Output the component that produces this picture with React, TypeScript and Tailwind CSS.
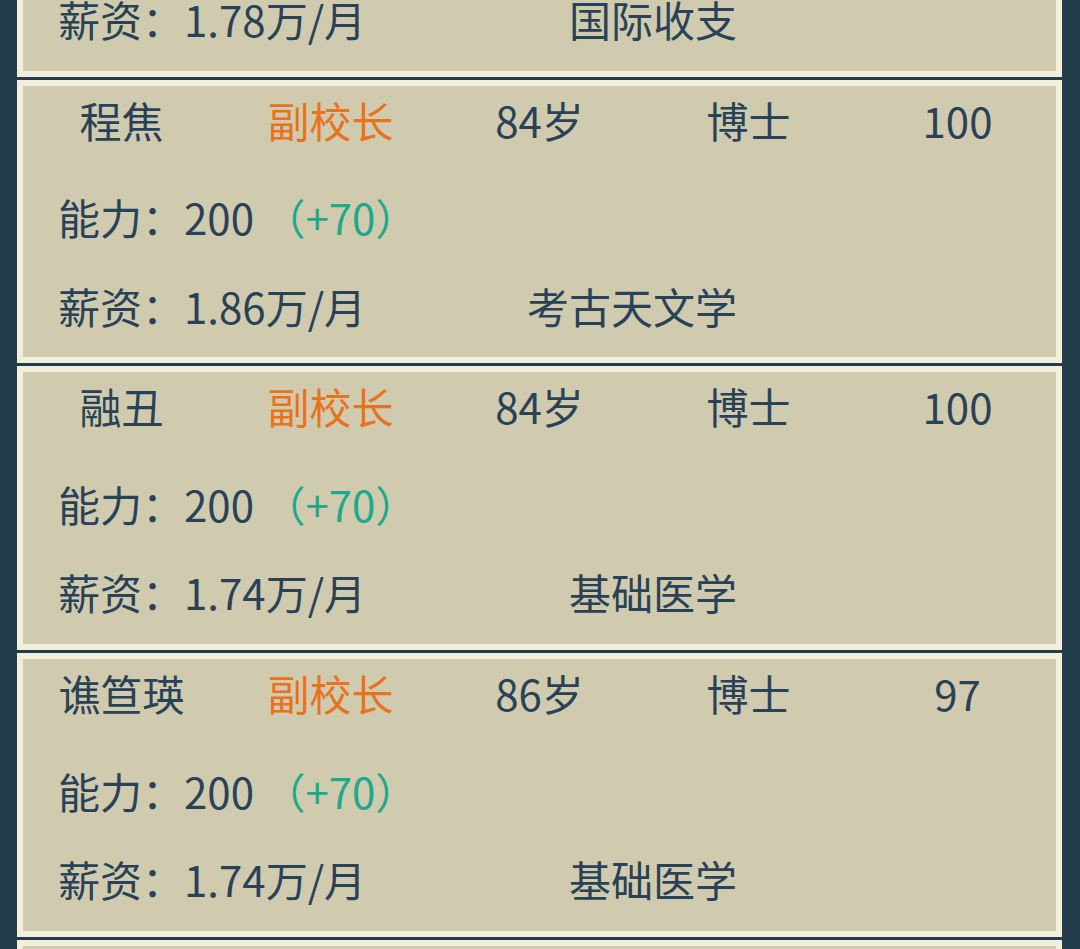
import React from "react";

interface Staff {
  name: string;
  title: string;
  age: number;
  degree: string;
  score: number;
  ability: number;
  bonus: number;
  salary: string;
  major: string;
}

const STAFF: Staff[] = [
  { name: "蒲岚", title: "副校长", age: 83, degree: "博士", score: 99, ability: 200, bonus: 70, salary: "1.78", major: "国际收支" },
  { name: "程焦", title: "副校长", age: 84, degree: "博士", score: 100, ability: 200, bonus: 70, salary: "1.86", major: "考古天文学" },
  { name: "融丑", title: "副校长", age: 84, degree: "博士", score: 100, ability: 200, bonus: 70, salary: "1.74", major: "基础医学" },
  { name: "谯笪瑛", title: "副校长", age: 86, degree: "博士", score: 97, ability: 200, bonus: 70, salary: "1.74", major: "基础医学" },
  { name: "司马涵", title: "教务长", age: 79, degree: "博士", score: 95, ability: 190, bonus: 60, salary: "1.62", major: "理论物理" },
];

function StaffCard({ s }: { s: Staff }) {
  return (
    <div className="h-[283.7px] shrink-0 bg-[#d0cbae] shadow-[inset_0_0_0_6px_#f2efdc] pt-[10px] text-[42px] leading-[60px] text-[#2a4258]">
      <div className="grid grid-cols-5 h-[60px] text-center whitespace-nowrap">
        <span>{s.name}</span>
        <span className="text-[#e8731f]">{s.title}</span>
        <span>{s.age}岁</span>
        <span>{s.degree}</span>
        <span>{s.score}</span>
      </div>
      <div className="mt-[37.5px] h-[60px] pl-[41px] whitespace-nowrap">
        能力：{s.ability}{" "}
        <span className="text-[#1da98c]">（+{s.bonus}）</span>
      </div>
      <div className="mt-[28.5px] h-[60px] pl-[41px] flex whitespace-nowrap">
        <span className="w-[340px]">薪资：{s.salary}万/月</span>
        <span className="w-[339px] text-right">{s.major}</span>
      </div>
    </div>
  );
}

export default function App() {
  return (
    <div
      className="w-[1080px] h-[949px] overflow-hidden bg-[#233e4a] pl-[17px] pr-[18px]"
      style={{ fontFamily: '"Noto Sans CJK SC", "Noto Sans", sans-serif' }}
    >
      <div className="-mt-[207px] flex flex-col gap-[3px]">
        {STAFF.map((s, i) => (
          <StaffCard key={i} s={s} />
        ))}
      </div>
    </div>
  );
}
